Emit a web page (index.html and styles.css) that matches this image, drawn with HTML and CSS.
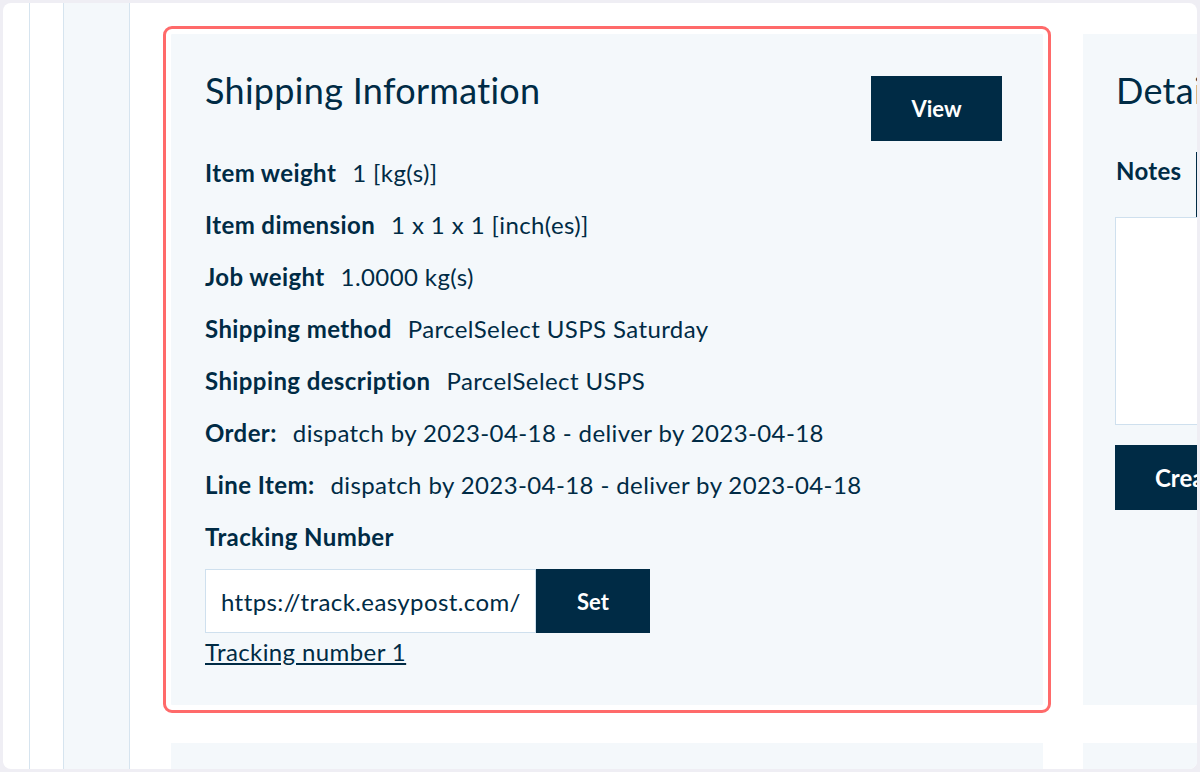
FILE: index.html
```html
<!DOCTYPE html>
<html lang="en">
<head>
    <meta charset="UTF-8">
    <meta name="viewport" content="width=device-width, initial-scale=1.0">
    <title>Shipping Information</title>
    <link rel="stylesheet" href="styles.css">
</head>
<body>
    <div class="frame">
        <div class="rail rail-1"></div>
        <div class="rail rail-2"></div>
        <div class="rail rail-3"></div>
        <div class="main">
            <div class="card card-shipping">
                <div class="card-head">
                    <h2>Shipping Information</h2>
                    <button class="btn btn-view">View</button>
                </div>
                <div class="info-row"><span class="label">Item weight</span><span class="value">1 [kg(s)]</span></div>
                <div class="info-row"><span class="label">Item dimension</span><span class="value">1 x 1 x 1 [inch(es)]</span></div>
                <div class="info-row"><span class="label">Job weight</span><span class="value">1.0000 kg(s)</span></div>
                <div class="info-row"><span class="label">Shipping method</span><span class="value">ParcelSelect USPS Saturday</span></div>
                <div class="info-row"><span class="label">Shipping description</span><span class="value">ParcelSelect USPS</span></div>
                <div class="info-row"><span class="label">Order:</span><span class="value">dispatch by 2023-04-18 - deliver by 2023-04-18</span></div>
                <div class="info-row"><span class="label">Line Item:</span><span class="value">dispatch by 2023-04-18 - deliver by 2023-04-18</span></div>
                <div class="info-row"><span class="label">Tracking Number</span></div>
                <div class="tracking">
                    <input type="text" class="tracking-input" value="https://track.easypost.com/">
                    <button class="btn btn-set">Set</button>
                </div>
                <a href="#" class="tracking-link">Tracking number 1</a>
            </div>

            <div class="card card-details">
                <h2>Details</h2>
                <div class="tabs">
                    <span class="tab tab-active">Notes</span>
                    <span class="tab">History</span>
                </div>
                <textarea class="notes-input"></textarea>
                <button class="btn btn-create">Create Note</button>
            </div>

            <div class="card card-empty"></div>
            <div class="card card-empty"></div>
        </div>
    </div>
</body>
</html>
```

FILE: styles.css
```css
body {
    margin: 0;
    background-color: #efeef4;
    font-family: Lato, "Noto Sans", sans-serif;
    color: #002b45;
}
.frame {
    margin: 3px;
    width: 1194px;
    height: 766px;
    background-color: #fff;
    border-radius: 8px;
    overflow: hidden;
    display: flex;
}
.rail {
    flex-shrink: 0;
    border-right: 1px solid #d6e4ef;
}
.rail-1 {
    width: 26px;
}
.rail-2 {
    width: 33px;
}
.rail-3 {
    width: 65px;
    background-color: #f4f8fb;
}
.main {
    flex: 1;
    padding: 31px 0 0 41px;
    display: grid;
    grid-template-columns: 872px 400px;
    grid-template-rows: 671px 100px;
    column-gap: 40px;
    row-gap: 38px;
}
.card {
    background-color: #f4f8fb;
    box-sizing: border-box;
}
.card-shipping {
    padding: 38px 41px 0 34px;
    outline: 3px solid #ff6a6a;
    outline-offset: 5px;
    border-radius: 1px;
}
.card-head {
    display: flex;
    justify-content: space-between;
    align-items: flex-start;
    margin-bottom: 18px;
}
h2 {
    margin: 0;
    font-size: 36px;
    font-weight: 400;
    line-height: 36px;
    letter-spacing: 0.3px;
}
.btn {
    background-color: #002b45;
    color: #fff;
    border: none;
    font-family: inherit;
    font-weight: 700;
    font-size: 22px;
    cursor: pointer;
}
.btn-view {
    width: 131px;
    height: 65px;
    margin-top: 4px;
}
.info-row {
    display: flex;
    gap: 16px;
    font-size: 24px;
    letter-spacing: 0.4px;
    line-height: 28px;
    margin-bottom: 24px;
}
.label {
    font-weight: 700;
}
.tracking {
    display: flex;
    margin-top: -6px;
}
.tracking-input {
    width: 331px;
    height: 64px;
    box-sizing: border-box;
    border: 1px solid #cfe0ee;
    padding: 0 15px;
    font-family: inherit;
    font-size: 24px;
    letter-spacing: 0.4px;
    color: #002b45;
    outline: none;
}
.btn-set {
    width: 114px;
    height: 64px;
}
.tracking-link {
    display: inline-block;
    margin-top: 4px;
    font-size: 24px;
    letter-spacing: 0.4px;
    color: #002b45;
}
.card-details {
    padding: 38px 0 0 33px;
}
.tabs {
    display: flex;
    margin-top: 44px;
    height: 65px;
}
.tab {
    font-size: 24px;
    font-weight: 700;
    letter-spacing: 0.3px;
    padding-top: 4px;
    width: 80px;
}
.tab + .tab {
    border-left: 2px solid #002b45;
    padding-left: 20px;
}
.notes-input {
    display: block;
    width: 400px;
    height: 208px;
    margin-left: -1px;
    border: 1px solid #cfe0ee;
    box-sizing: border-box;
    resize: none;
}
.btn-create {
    margin: 20px 0 0 -1px;
    width: 200px;
    height: 65px;
    text-align: left;
    padding-left: 40px;
    font-size: 24px;
}
```
